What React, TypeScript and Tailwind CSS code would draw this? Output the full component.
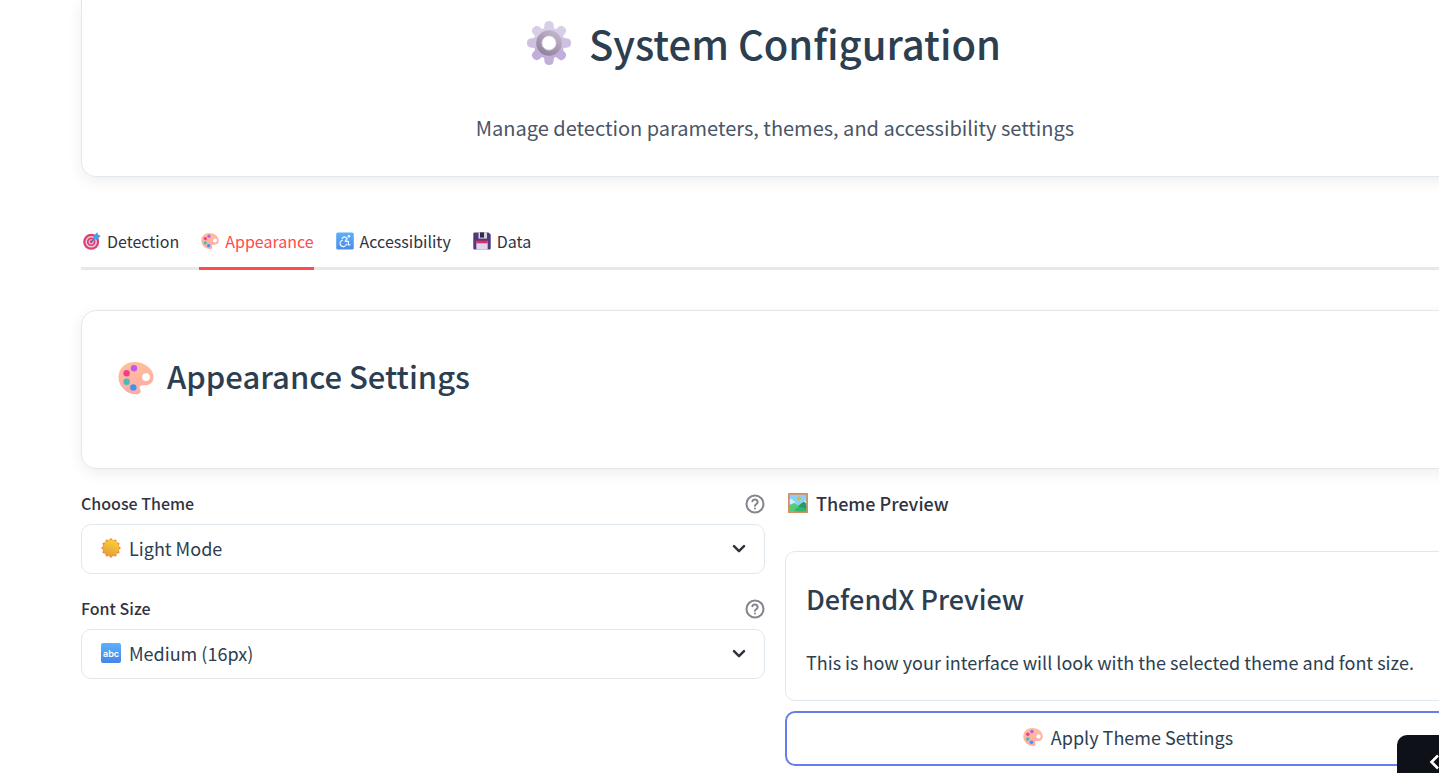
import { useId, type ReactNode } from "react";

type IconProps = { className?: string };

function GearIcon({ className }: IconProps) {
  const id = useId();
  return (
    <svg viewBox="0 0 44 44" className={className} aria-hidden="true">
      <defs>
        <linearGradient id={`${id}a`} gradientUnits="userSpaceOnUse" x1="0" y1="0" x2="0" y2="44">
          <stop offset="0" stopColor="#dcd3e9" />
          <stop offset="1" stopColor="#bba4d3" />
        </linearGradient>
        <linearGradient id={`${id}b`} x1="0.8" y1="0" x2="0.2" y2="1">
          <stop offset="0" stopColor="#c0b2c8" />
          <stop offset="1" stopColor="#9384a0" />
        </linearGradient>
      </defs>
      <circle cx="22" cy="22" r="11" fill="none" stroke={`url(#${id}a)`} strokeWidth="9" />
      {[0, 45, 90, 135, 180, 225, 270, 315].map((angle) => (
        <path
          key={angle}
          fill={angle > 90 && angle < 270 ? "#c2aeda" : angle % 180 === 90 ? "#cdc0e0" : "#d8cee7"}
          d="M16.8 9.500L17.500 3.200Q18.200 0 22 0Q25.800 0 26.500 3.200L27.200 9.500Z"
          transform={`rotate(${angle} 22 22)`}
        />
      ))}
      <circle cx="22" cy="22" r="10" fill="none" stroke={`url(#${id}b)`} strokeWidth="5.500" />
      <circle cx="22" cy="22" r="7.200" fill="#fff" stroke="#c8bfd0" strokeWidth="0.800" />
    </svg>
  );
}

function PaletteIcon({ className }: IconProps) {
  const id = useId();
  return (
    <svg viewBox="0 0 36 36" className={className} aria-hidden="true">
      <defs>
        <linearGradient id={id} x1="0.5" y1="0" x2="0.6" y2="1">
          <stop offset="0" stopColor="#fcc09a" />
          <stop offset="0.35" stopColor="#ffb7a0" />
          <stop offset="1" stopColor="#fcaaa8" />
        </linearGradient>
      </defs>
      <path
        fill={`url(#${id})`}
        fillRule="evenodd"
        d="M16.5 2C7.5 2 .5 8.300.5 17.200C.5 26.500 9 34.300 18 34.300C21 34.300 23 33 22.600 30.700C22.300 28.600 20.800 27.700 22 26.200C23.500 24.400 27 26 30.500 24.700C33.500 23.600 35.500 21 35.500 17.500C35.500 8 26 2 16.500 2ZM28 13.200A3.900 3.900 0 1 1 28 21A3.900 3.900 0 1 1 28 13.200Z"
      />
      <circle cx="16" cy="8.300" r="3.200" fill="#bd59ef" />
      <circle cx="8.600" cy="13.200" r="3.200" fill="#f43a92" />
      <circle cx="8.600" cy="21.800" r="3.200" fill="#45bcbb" />
      <circle cx="15.300" cy="27.400" r="3.200" fill="#4193f0" />
    </svg>
  );
}

function TargetIcon({ className }: IconProps) {
  return (
    <svg viewBox="0 0 18 18" className={className} aria-hidden="true">
      <circle cx="8.200" cy="9.800" r="8" fill="#d9426f" />
      <circle cx="8.200" cy="9.800" r="5.800" fill="#f2c9dc" />
      <circle cx="8.200" cy="9.800" r="4.300" fill="#d63f70" />
      <circle cx="8.200" cy="9.800" r="2.600" fill="#f0bfd5" />
      <circle cx="8.200" cy="9.800" r="1.300" fill="#c92f62" />
      <path d="M8.300 9.700L14 4" stroke="#2f7fc4" strokeWidth="1.300" strokeLinecap="round" />
      <path d="M10.500 7.500V4L14.200.3L15.200 2.800L17.800 3.800L14.200 7.500Z" fill="#3fa3ec" />
    </svg>
  );
}

function WheelchairIcon({ className }: IconProps) {
  const id = useId();
  return (
    <svg viewBox="0 0 18 18" className={className} aria-hidden="true">
      <defs>
        <linearGradient id={id} x1="0" y1="0" x2="0" y2="1">
          <stop offset="0" stopColor="#5cb0fb" />
          <stop offset="1" stopColor="#4a8ceb" />
        </linearGradient>
      </defs>
      <rect x="0.200" y="0.400" width="17.600" height="17.200" rx="1.600" fill={`url(#${id})`} />
      <circle cx="12.900" cy="4.200" r="1.300" fill="#f4f8ff" />
      <g fill="none" stroke="#f4f8ff" strokeWidth="1.200" strokeLinecap="round" strokeLinejoin="round">
        <path d="M6 6.300L8.300 4.700L11.300 6.400L9.200 9.300H12.600L12.200 12.800H14" />
        <path d="M6.300 8.200A3.300 3.300 0 1 0 10.600 12" />
      </g>
    </svg>
  );
}

function FloppyIcon({ className }: IconProps) {
  return (
    <svg viewBox="0 0 18 18" className={className} aria-hidden="true">
      <path d="M1.500.4H15.500L17.700 2.600V16.500Q17.700 17.600 16.600 17.600H1.400Q.3 17.600.3 16.500V1.600Q.3.400 1.500.4Z" fill="#51397e" />
      <path d="M5.500.4H14V6.600H5.500Z" fill="#d9d2e4" />
      <path d="M7 .4H11V5.600H7Z" fill="#33264f" />
      <path d="M3.300 9H14.700V17.600H3.300Z" fill="#dfd5f0" />
      <path d="M3.300 8.600H14.700V11.300H3.300Z" fill="#e22c61" />
    </svg>
  );
}

function SunIcon({ className }: IconProps) {
  const id = useId();
  return (
    <svg viewBox="0 0 20 20" className={className} aria-hidden="true">
      <defs>
        <linearGradient id={id} x1="0.700" y1="0" x2="0.300" y2="1">
          <stop offset="0" stopColor="#fdd038" />
          <stop offset="1" stopColor="#dfa03a" />
        </linearGradient>
      </defs>
      <g fill="#f58a3c">
        {[0, 30, 60, 90, 120, 150, 180, 210, 240, 270, 300, 330].map((angle) => (
          <path key={angle} d="M6.800 3.500L9.400.500Q10 0 10.600.500L13.200 3.500Z" transform={`rotate(${angle} 10 10)`} />
        ))}
      </g>
      <circle cx="10" cy="10" r="8" fill={`url(#${id})`} />
    </svg>
  );
}

function AbcIcon({ className }: IconProps) {
  return (
    <span
      aria-hidden="true"
      className={`flex items-center justify-center rounded-[2px] bg-linear-to-b from-[#5cb2fc] to-[#4585e6] font-['Inter'] text-[9px] leading-none font-semibold text-white ${className ?? ""}`}
    >
      abc
    </span>
  );
}

function PictureIcon({ className }: IconProps) {
  return (
    <svg viewBox="0 0 20 20" className={className} aria-hidden="true">
      <rect width="20" height="20" rx="0.600" fill="#d98d63" />
      <rect x="1.800" y="1.800" width="16.400" height="16.400" fill="#86d3fa" />
      <path d="M1.800 6Q4 5 5 7.500Q7.500 8 7.500 11H1.800Z" fill="#dceafb" />
      <circle cx="11" cy="5.500" r="1.900" fill="#f9ad2b" />
      <path d="M14 9Q16 6.500 18.200 8V12H12Z" fill="#c7e6fb" />
      <path d="M9 14L15.500 8.500L18.200 10.500V18.200H9Z" fill="#259b65" />
      <path d="M1.800 12.500L6 9.800Q9 11 11 14L14.500 18.200H1.800Z" fill="#51ce78" />
      <path d="M8 15Q12 12.500 18.200 16V18.200H6Z" fill="#35b571" />
    </svg>
  );
}

function HelpIcon() {
  return (
    <svg
      viewBox="0 0 24 24"
      className="size-[22px]"
      fill="none"
      stroke="currentColor"
      strokeWidth="2.200"
      strokeLinecap="round"
      strokeLinejoin="round"
      aria-hidden="true"
    >
      <circle cx="12" cy="12" r="9.300" />
      <path d="M9.100 9a3 3 0 0 1 5.800 1c0 2-3 2.400-3 4" />
      <path d="M12 17h.01" />
    </svg>
  );
}

const tabs = [
  { label: "Detection", Icon: TargetIcon },
  { label: "Appearance", Icon: PaletteIcon },
  { label: "Accessibility", Icon: WheelchairIcon },
  { label: "Data", Icon: FloppyIcon },
];

function SelectField({ id, label, icon, options }: { id: string; label: string; icon: ReactNode; options: string[] }) {
  return (
    <div>
      <div className="flex h-[26px] items-center justify-between">
        <label htmlFor={id} className="pb-0.5 text-base font-medium text-[#31333f]">
          {label}
        </label>
        <button type="button" aria-label={`Help: ${label}`} className="-mr-px text-[#83858c]">
          <HelpIcon />
        </button>
      </div>
      <div className="relative mt-[7px]">
        <select
          id={id}
          className="h-[50px] w-full appearance-none rounded-[10px] border border-[#e1e8ed] bg-white pr-12 pb-[3px] pl-[47px] text-lg text-[#2c3e50]"
        >
          {options.map((option) => (
            <option key={option}>{option}</option>
          ))}
        </select>
        <span className="pointer-events-none absolute inset-y-0 left-5 flex items-center pb-0.5">{icon}</span>
        <svg
          viewBox="0 0 14 10"
          className="pointer-events-none absolute top-5 right-[19px] h-[10px] w-[14px]"
          fill="none"
          stroke="#31333f"
          strokeWidth="2.500"
          strokeLinecap="round"
          strokeLinejoin="round"
          aria-hidden="true"
        >
          <path d="M2 2.200L7 7.200L12 2.200" />
        </svg>
      </div>
    </div>
  );
}

export default function App() {
  return (
    <div className="overflow-hidden bg-white pb-[7px] font-['Noto_Sans_CJK_SC','Noto_Sans',sans-serif] text-[#2c3e50]">
      <main className="-mr-[30px] pl-[81px]">
        <header className="rounded-b-[15px] border border-t-0 border-[#e1e8ed] px-9 pt-4 pb-[30px] text-center shadow-[0_4px_15px_rgba(0,0,0,0.07)]">
          <h1 className="flex items-center justify-center gap-[18px] pr-[22px] text-[40px] leading-[54px] font-medium">
            <GearIcon className="size-11" />
            System Configuration
          </h1>
          <p className="mt-10 text-xl leading-9 text-[#4a5568]">
            Manage detection parameters, themes, and accessibility settings
          </p>
        </header>

        <div role="tablist" className="mt-10 flex gap-5 border-b-3 border-[#e8e8e8]">
          {tabs.map(({ label, Icon }) => {
            const active = label === "Appearance";
            return (
              <button
                key={label}
                type="button"
                role="tab"
                aria-selected={active}
                className={`-mb-[3px] flex h-[53px] items-center gap-[6px] border-b-3 pb-0.5 pl-0.5 text-base ${
                  active ? "border-[#ff4b4b] text-[#ff4b4b]" : "border-transparent text-[#31333f]"
                }`}
              >
                <Icon className="size-[18px]" />
                {label}
              </button>
            );
          })}
        </div>

        <section className="mt-10 rounded-[15px] border border-[#e1e8ed] px-9 pt-[45px] pb-[72px] shadow-[0_4px_15px_rgba(0,0,0,0.07)]">
          <h2 className="flex items-center gap-[13px] text-[31px] leading-10 font-medium">
            <PaletteIcon className="h-10 w-9 pt-1" />
            Appearance Settings
          </h2>
        </section>

        <div className="mt-[22px] grid grid-cols-2 gap-5">
          <div className="flex flex-col gap-[22px]">
            <SelectField
              id="theme"
              label="Choose Theme"
              icon={<SunIcon className="size-5" />}
              options={["Light Mode", "Dark Mode"]}
            />
            <SelectField
              id="font-size"
              label="Font Size"
              icon={<AbcIcon className="size-5" />}
              options={["Medium (16px)", "Small (14px)", "Large (18px)"]}
            />
          </div>

          <div>
            <h3 className="flex h-[26px] items-center gap-2 pb-0.5 pl-[3px] text-lg font-medium text-[#31333f]">
              <PictureIcon className="size-5" />
              Theme Preview
            </h3>
            <div className="mt-[34px] rounded-[10px] border border-[#e1e8ed] px-5 pt-[29px] pb-[23px]">
              <h4 className="text-[27px] leading-9 font-medium">DefendX Preview</h4>
              <p className="mt-[30px] text-lg leading-[30px]">
                This is how your interface will look with the selected theme and font size.
              </p>
            </div>
            <button
              type="button"
              className="mt-[10px] flex h-[55px] w-full items-center justify-center gap-2 rounded-[10px] border-2 border-[#667eea] bg-white pb-1 pl-0.5 text-lg"
            >
              <PaletteIcon className="size-5" />
              Apply Theme Settings
            </button>
          </div>
        </div>
      </main>

      <button
        type="button"
        aria-label="Open panel"
        className="fixed right-0 bottom-0 h-[38px] w-[42px] overflow-hidden rounded-tl-[10px] bg-[#0e1117] pl-8"
      >
        <svg
          viewBox="0 0 10 16"
          className="mt-4 h-4 w-[10px]"
          fill="none"
          stroke="#fff"
          strokeWidth="2.600"
          aria-hidden="true"
        >
          <path d="M9 1.500L2.500 8L9 14.500" />
        </svg>
      </button>
    </div>
  );
}
